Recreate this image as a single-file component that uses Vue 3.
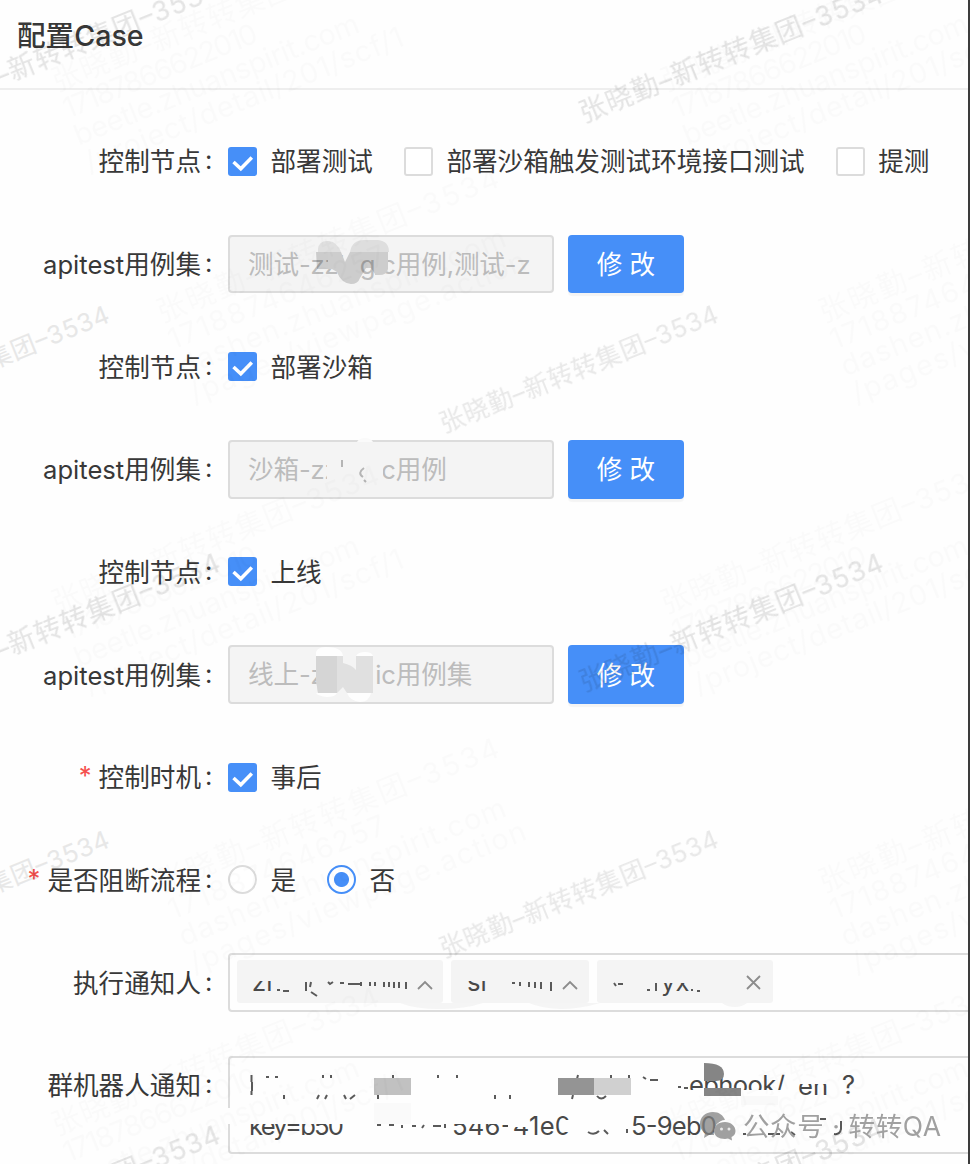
<script setup>
import { ref } from 'vue'

const rows = ref([
  {
    label: '控制节点',
    type: 'check',
    options: [
      { text: '部署测试', on: true },
      { text: '部署沙箱触发测试环境接口测试', on: false },
      { text: '提测', on: false },
    ],
  },
  { label: 'apitest用例集', type: 'input', value: '测试-zzlogic用例,测试-z' },
  { label: '控制节点', type: 'check', options: [{ text: '部署沙箱', on: true }] },
  { label: 'apitest用例集', type: 'input', value: '沙箱-zzlogic用例' },
  { label: '控制节点', type: 'check', options: [{ text: '上线', on: true }] },
  { label: 'apitest用例集', type: 'input', value: '线上-zzlogic用例集' },
  { label: '控制时机', required: true, type: 'check', options: [{ text: '事后', on: true }] },
  {
    label: '是否阻断流程',
    required: true,
    type: 'radio',
    options: [
      { text: '是', on: false },
      { text: '否', on: true },
    ],
  },
  { label: '执行通知人', type: 'tags' },
  { label: '群机器人通知', type: 'area' },
])

const pick = (row, opt) => {
  if (row.type === 'radio') {
    row.options.forEach((o) => (o.on = false))
    opt.on = true
    return
  }
  opt.on = !opt.on
}

const owner = '张晓勤–新转转集团–3534'

// baseline start and length of every strong watermark
const marks = [
  { x: 584, y: 123, w: 325 },
  { x: -79, y: 118, w: 325 },
  { x: 444, y: 433, w: 298 },
  { x: -165, y: 433, w: 298 },
  { x: 584, y: 692, w: 325 },
  { x: -79, y: 692, w: 325 },
  { x: 444, y: 958, w: 298 },
  { x: -165, y: 958, w: 298 },
  { x: 584, y: 1257, w: 325 },
  { x: -79, y: 1264, w: 325 },
]

const beetle = [
  { t: owner, w: 350 },
  { t: '17187866622010', w: 207 },
  { t: 'beetle.zhuanspirit.com', w: 305 },
  { t: '/project/detail/201/scf/1', w: 341 },
]
const dashen = [
  { t: owner, w: 366 },
  { t: '1718874646257', w: 232 },
  { t: 'dashen.zhuanspirit.com', w: 350 },
  { t: '/pages/viewpage.action', w: 360 },
]
const faint = [
  { x: 57, y: 92, lines: beetle },
  { x: 666, y: 92, lines: beetle },
  { x: 57, y: 614, lines: beetle },
  { x: 666, y: 614, lines: beetle },
  { x: 57, y: 1136, lines: beetle },
  { x: 666, y: 1136, lines: beetle },
  { x: 162, y: 323, lines: dashen },
  { x: 824, y: 323, lines: dashen },
  { x: 162, y: 893, lines: dashen },
  { x: 824, y: 893, lines: dashen },
]
</script>

<template>
  <div class="page">
    <header>
      <h1>配置Case</h1>
    </header>
    <div class="form">
      <div v-for="(row, i) in rows" :key="i" class="row">
        <div class="label">
          <span v-if="row.required" class="star">*</span>{{ row.label }}<span class="colon">:</span>
        </div>

        <div v-if="row.type === 'check' || row.type === 'radio'" class="options">
          <div v-for="opt in row.options" :key="opt.text" class="option" @click="pick(row, opt)">
            <span class="box" :class="[row.type, { on: opt.on }]">
              <svg v-if="row.type === 'check' && opt.on" viewBox="0 0 29 29">
                <path d="M5.500 15L12.800 21.800L23.800 10.500" />
              </svg>
            </span>
            <span class="text">{{ opt.text }}</span>
          </div>
        </div>

        <template v-else-if="row.type === 'input'">
          <div class="input">{{ row.value }}</div>
          <button>修 改</button>
        </template>

        <div v-else-if="row.type === 'tags'" class="select">
          <span class="tag one"></span>
          <span class="tag two"></span>
          <span class="tag three"></span>
        </div>

        <div v-else class="area"></div>
      </div>
    </div>

    <svg class="layer" viewBox="0 0 970 1164">
      <!-- smudges over the case set fields -->
      <path d="M318 252V249Q319 240 329 241Q337 242 341 252Z" fill="#e0e0e0" />
      <path d="M350 252Q352 240 364 240H378Q389 241 389 252Z" fill="#dedede" />
      <path d="M328 252H341L345 262L350 252H360V278Q358 284 351 284Q341 283 337 272L332 269H328Z" fill="#cdcdcd" />
      <path d="M316 252H328V269H317ZM360 252H375V274L371 268H366L360 278Z" class="tint" />
      <path d="M375 252H388V269Q387 275 379 275H375Z" fill="#cdcdcd" />

      <path d="M357 442Q359 438 365 438Q371 438 373 442Z" fill="#fafafa" />
      <path d="M327 456H383V485H327Z" fill="#f4f4f4" />
      <path d="M315 456H328V462H315Z" fill="#f4f4f4" />
      <path d="M342 460V467M364 468Q357 473 363 477M364 480L366 482" fill="none" stroke="#b5b5b5" stroke-width="2" />

      <path d="M316 656V652Q318 647 326 647Q342 647 343 656ZM356 656Q358 652 365 652Q372 652 373 656Z" fill="#fefefe" />
      <path d="M316 693H337Q335 697 327 697Q318 696 316 693ZM347 693H371Q369 702 360 702Q350 701 347 693Z" fill="#fefefe" />
      <path d="M341 656H375V693H341Z" fill="#f4f4f4" />
      <path d="M316 656H343V663Q352 665 356 670V656H373V693H347L343 687L337 693H318L316 680Z" fill="#e0e0e0" />
      <path d="M316 656H337V693H318L316 680Z" fill="#d5d5d5" />

      <!-- what is left of the people tags -->
      <g class="bits">
        <text x="252" y="991" class="frag">zl</text>
        <text x="467" y="991" class="frag">sı</text>
        <text x="661" y="991" class="frag">yx</text>
      </g>
      <path d="M250 968H275V981H250ZM462 968H490V981H462ZM658 968H690V983H658Z" fill="#f4f4f4" />
      <g class="dash">
        <path d="M277 990h3M283 991h6M306 982v9M311 982l-1 5M311 992l6 4M328 982l2 2l3 -2M340 983h4M348 984h12M361 982v4" />
        <path d="M370 982v4M375 982v4M384 982v5M389 982v5M394 982v6M399 982v6M406 982v7" />
        <path d="M512 983h3M520 982v4M529 982v5M535 982v6M541 982v7M551 982v9" />
        <path d="M614 983l2 3M618 984h5M647 990h3M656 983v8M691 990h2M697 991h3" />
      </g>
      <g class="cross">
        <path d="M418 989L425 982L432 989" />
        <path d="M563 989L570 982L577 989" />
        <path d="M747 976L760 989M760 976L747 989" />
      </g>
      <path d="M400 1003H483Q465 1009 440 1009Q415 1009 400 1003ZM529 1003H600Q580 1009 560 1009Q540 1008 529 1003ZM722 1003H747Q742 1007 735 1007Q727 1007 722 1003Z" fill="#f5f5f5" />

      <!-- robot address -->
      <g class="bits">
        <text x="689" y="1094" class="frag" textLength="96">ebhook/</text>
        <text x="798" y="1095" class="frag">en</text>
        <text x="842" y="1094" class="frag">?</text>
        <text x="249" y="1135" class="frag" textLength="95">key=b50</text>
        <text x="452" y="1135" class="frag" textLength="119">546-41e0</text>
        <text x="631" y="1135" class="frag" textLength="86">5-9eb0</text>
      </g>
      <path d="M674 1090H786V1098H674ZM797 1076H828V1084H797ZM226 1108H346V1124H226ZM450 1112H500V1124H450ZM508 1112H526V1127H508ZM565 1120H574V1132H565Z" fill="#fefefe" />
      <g class="dash">
        <path d="M251.500 1075v7M251.500 1091v4M252 1082v9M266 1077h3M275 1077h3M323 1075v3M331 1075v3M393 1075v3M438 1075v3M457 1075v3" />
        <path d="M284 1095v4M319 1095l-2 4M327 1095l-2 4M344 1095l2 4M355 1095l-5 4M378 1095v4M495 1095v4M510 1095v4" />
        <path d="M578 1075l-1 4M611 1075v3M629 1075v3M643 1077l3 2M650 1080h8M678 1087h3M684 1088h4M573 1095l-1 4M597 1096q4 5 9 0" />
        <path d="M377 1125h4M389 1125h5M402 1125v3M412 1126h4M424 1125l-2 3M433 1126h8M445 1124v4" />
        <path d="M588 1132q6 4 11 -1M604 1130l4 4M627 1129v4M722 1134h8M743 1134h3M768 1134h12M791 1132l4 3M820 1119h6M834 1134q6 1 7 -5v-8" />
      </g>
      <path d="M374 1078H411V1095H374Z" fill="#c1c1c1" />
      <path d="M374 1103H411V1124H374Z" fill="#fafafa" />
      <path d="M558 1078H594V1095H558Z" fill="#949494" />
      <path d="M594 1078H631V1095H594Z" fill="#d0d0d0" />
      <path d="M704 1088H741V1096H704Z" fill="#858585" />
      <path d="M704 1063Q724 1063 724 1074Q724 1081 716 1081H704Z" fill="#858585" />
      <path d="M741 1096H778V1105H741Z" fill="#f9f9f9" />

      <g class="faint">
        <g v-for="(f, i) in faint" :key="i" :transform="`translate(${f.x} ${f.y}) rotate(-22)`">
          <text v-for="(l, n) in f.lines" :key="n" :y="n * 29" :textLength="l.w">{{ l.t }}</text>
        </g>
      </g>
      <g class="mark">
        <text
          v-for="(m, i) in marks"
          :key="i"
          :class="{ small: m.w < 300 }"
          :transform="`translate(${m.x} ${m.y}) rotate(-22)`"
          :textLength="m.w"
        >{{ owner }}</text>
      </g>

      <!-- account signature -->
      <g class="sign">
        <path class="bubble" d="M713 1112C705 1112 700 1117 700 1124C700 1128 702 1131 705 1133L704 1138L709 1135H714C712 1127 719 1120 725 1120C723 1115 719 1112 713 1112Z" />
        <path d="M725 1122C718 1122 714 1126 714 1131C714 1136 719 1139 725 1139L728 1138.500L732 1140.500L731.500 1137C734 1136 735.500 1134 735.500 1131C735.500 1126 731 1122 725 1122Z" />
        <circle cx="721.500" cy="1129" r="1.500" class="eye" />
        <circle cx="729" cy="1129" r="1.500" class="eye" />
        <text x="743" y="1136" textLength="198">公众号 · 转转QA</text>
      </g>
    </svg>
  </div>
</template>

<style>
body {
  margin: 0;
  background: #fefefe;
}
</style>

<style scoped>
.page {
  position: relative;
  box-sizing: border-box;
  width: 970px;
  height: 1164px;
  overflow: hidden;
  background: #fefefe;
  border-right: 2px solid #3c3c3c;
  color: #383838;
  font-family: Inter, "Noto Sans CJK SC", sans-serif;
  font-size: 25.600px;
}
header {
  box-sizing: border-box;
  height: 90px;
  padding: 14px 17px 0;
  border-bottom: 2px solid #eee;
}
h1 {
  margin: 0;
  font-size: 28.600px;
  line-height: 44px;
  font-weight: 500;
}
.form {
  padding-top: 42px;
  display: flex;
  flex-direction: column;
  gap: 44px;
}
.row {
  display: flex;
  height: 58.670px;
  flex: none;
}
.label {
  box-sizing: border-box;
  width: 228px;
  padding-bottom: 3px;
  flex: none;
  display: flex;
  justify-content: flex-end;
  align-items: center;
  white-space: nowrap;
}
.star {
  color: #f5504e;
  margin-right: 7px;
}
.colon {
  width: 23px;
  padding-left: 4px;
}
.options {
  display: flex;
  align-items: center;
  gap: 31px;
}
.option {
  display: flex;
  align-items: center;
  white-space: nowrap;
  cursor: pointer;
}
.text {
  padding-bottom: 3px;
}
.box {
  box-sizing: border-box;
  width: 29px;
  height: 29px;
  margin-right: 13.500px;
  border: 2px solid #dcdcdc;
  border-radius: 3px;
  background: #fff;
}
.box svg {
  display: block;
  width: 29px;
  height: 29px;
}
.box path {
  fill: none;
  stroke: #fff;
  stroke-width: 3.500;
}
.box.check.on {
  border: none;
  background: #468ff8;
}
.box.radio {
  border-radius: 50%;
}
.box.radio.on {
  border-color: #468ff8;
  background: radial-gradient(circle, #468ff8 7px, #fff 8px);
}
.input {
  box-sizing: border-box;
  width: 326px;
  padding: 0 18px;
  border: 2px solid #dcdcdc;
  border-radius: 4px;
  background: #f4f4f4;
  color: #bcbcbc;
  line-height: 55px;
  letter-spacing: -0.15px;
  white-space: nowrap;
  overflow: hidden;
}
button {
  width: 116px;
  margin-left: 14px;
  padding: 0 0 3px;
  border: none;
  border-radius: 4px;
  background: #468ff8;
  box-shadow: 0 3px 1px rgba(0, 0, 0, 0.04);
  color: #fff;
  font: inherit;
  cursor: pointer;
}
.select {
  box-sizing: border-box;
  flex: 1;
  margin-right: -20px;
  padding: 5px 7px;
  display: flex;
  gap: 8px;
  border: 2px solid #dcdcdc;
  border-radius: 4px;
}
.tag {
  height: 43px;
  border-radius: 3px;
  background: #f4f4f4;
}
.one {
  width: 206px;
}
.two {
  width: 138px;
}
.three {
  width: 176px;
}
.area {
  box-sizing: border-box;
  flex: 1;
  height: 98px;
  margin-right: -20px;
  border: 2px solid #dcdcdc;
  border-radius: 4px;
}
.layer {
  position: absolute;
  left: 0;
  top: 0;
  width: 970px;
  height: 1164px;
  pointer-events: none;
}
.tint {
  fill: rgba(0, 0, 0, 0.16);
}
.frag {
  font-size: 25.600px;
}
.bits {
  fill: #484848;
}
.dash {
  fill: none;
  stroke: #5a5a5a;
  stroke-width: 2;
}
.cross {
  fill: none;
  stroke: #8c8c8c;
  stroke-width: 1.800;
}
.mark {
  fill: #000;
  stroke: #000;
  stroke-width: 0.200;
  font-size: 27px;
}
.mark text {
  opacity: 0.1;
}
.mark .small {
  opacity: 0.085;
  font-size: 25px;
}
.faint {
  fill: #000;
  opacity: 0.017;
  font-size: 29px;
  font-weight: 400;
}
.sign {
  fill: #a0a0a0;
  font-size: 26.500px;
}
.sign .bubble {
  fill: rgba(130, 130, 130, 0.75);
}
.sign .eye {
  fill: #e8e8e8;
}
</style>
